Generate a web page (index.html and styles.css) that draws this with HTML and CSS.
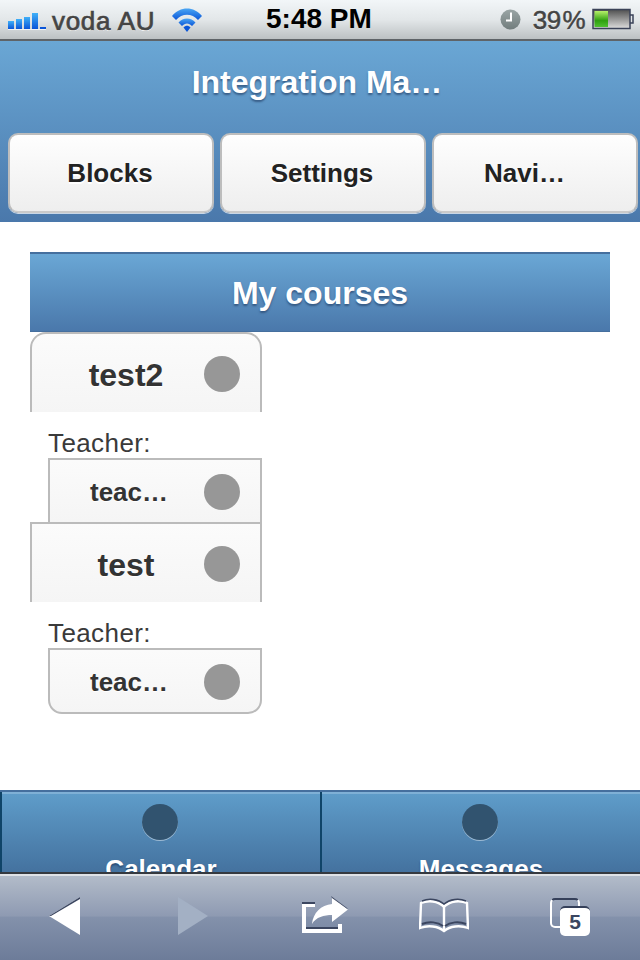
FILE: index.html
```html
<!DOCTYPE html>
<html lang="en">
<head>
  <meta charset="UTF-8">
  <title>My courses</title>
  <link rel="stylesheet" href="styles.css">
</head>
<body>

<div class="phone">

  <!-- iOS status bar -->
  <div class="statusbar">
    <div class="status-left">
      <svg class="signal" width="46" height="24" viewBox="0 0 46 24">
        <defs>
          <linearGradient id="barBlue" x1="0" y1="0" x2="0" y2="1">
            <stop offset="0" stop-color="#3fb0f8"/>
            <stop offset="1" stop-color="#0a55d8"/>
          </linearGradient>
        </defs>
        <rect x="0" y="14" width="6" height="8" fill="url(#barBlue)"/>
        <rect x="8" y="12" width="6" height="10" fill="url(#barBlue)"/>
        <rect x="16" y="10" width="6" height="12" fill="url(#barBlue)"/>
        <rect x="24" y="6" width="6" height="16" fill="url(#barBlue)"/>
        <rect x="32" y="20" width="6" height="2" fill="#0a55d8"/>
        <rect x="0" y="22" width="38" height="1" fill="#fff" opacity="0.7"/>
      </svg>
      <span class="carrier">voda AU</span>
      <svg class="wifi" width="30" height="24" viewBox="0 0 30 24">
        <defs>
          <linearGradient id="wifiBlue" x1="0" y1="0" x2="0" y2="1">
            <stop offset="0" stop-color="#4aa6f4"/>
            <stop offset="1" stop-color="#0a55d8"/>
          </linearGradient>
        </defs>
        <path d="M0 8 C8 -2 22 -2 30 8 L26 12 C20 5 10 5 4 12 Z" fill="url(#wifiBlue)"/>
        <path d="M6.5 14.5 C11 9 19 9 23.5 14.5 L20 18 C17 14.5 13 14.5 10 18 Z" fill="url(#wifiBlue)"/>
        <path d="M11.5 19.5 C13.5 17 16.5 17 18.5 19.5 L15 24 Z" fill="#0a55d8"/>
      </svg>
    </div>
    <span class="clock">5:48 PM</span>
    <div class="status-right">
      <svg class="alarm" width="21" height="21" viewBox="0 0 21 21">
        <defs>
          <linearGradient id="alarmGrey" x1="0" y1="0" x2="0" y2="1">
            <stop offset="0" stop-color="#9aa5a5"/>
            <stop offset="1" stop-color="#727d7d"/>
          </linearGradient>
        </defs>
        <circle cx="10.5" cy="10.5" r="10" fill="url(#alarmGrey)"/>
        <path d="M11 3.5 V11.5 H6" fill="none" stroke="#fff" stroke-width="2"/>
      </svg>
      <span class="percent">39 %</span>
      <svg class="battery" width="42" height="22" viewBox="0 0 42 22">
        <defs>
          <linearGradient id="battGreen" x1="0" y1="0" x2="0" y2="1">
            <stop offset="0" stop-color="#b6f06a"/>
            <stop offset="0.6" stop-color="#2fa010"/>
            <stop offset="1" stop-color="#4fc030"/>
          </linearGradient>
          <linearGradient id="battEmpty" x1="0" y1="0" x2="0" y2="1">
            <stop offset="0" stop-color="#4f4f4f"/>
            <stop offset="1" stop-color="#dedede"/>
          </linearGradient>
        </defs>
        <rect x="1" y="1.5" width="37" height="19" fill="url(#battEmpty)" stroke="#3a4258" stroke-width="1.5"/>
        <rect x="2.5" y="3" width="13.5" height="16" fill="url(#battGreen)"/>
        <path d="M38 7 H41 V15 H38" fill="none" stroke="#3a4258" stroke-width="1.5"/>
      </svg>
    </div>
  </div>

  <!-- page header -->
  <div class="header">
    <h1 class="title">Integration Ma…</h1>
    <div class="nav-buttons">
      <a class="nav-btn">Blocks</a>
      <a class="nav-btn">Settings</a>
      <a class="nav-btn nav-btn-cut">Navi…</a>
    </div>
  </div>

  <div class="content">
    <div class="section-head">My courses</div>

    <div class="course-list">
      <a class="row course first"><span class="row-label">test2</span><span class="dot"></span></a>
      <div class="teacher-label">Teacher:</div>
      <a class="row teacher"><span class="row-label">teac…</span><span class="dot"></span></a>

      <a class="row course"><span class="row-label">test</span><span class="dot"></span></a>
      <div class="teacher-label">Teacher:</div>
      <a class="row teacher last"><span class="row-label">teac…</span><span class="dot"></span></a>
    </div>
  </div>

  <!-- bottom tabs, cut off by the browser toolbar -->
  <div class="tabs">
    <a class="tab"><span class="tab-icon"></span><span class="tab-label">Calendar</span></a>
    <a class="tab"><span class="tab-icon"></span><span class="tab-label">Messages</span></a>
  </div>

  <!-- Safari toolbar -->
  <div class="toolbar">
    <svg class="tool tool-back" width="36" height="40" viewBox="0 0 36 40">
      <path d="M33 1 V39 L2 20 Z" fill="#fff"/>
      <path d="M2 20 L33 1 V3 L4 20 Z" fill="#3b4660"/>
    </svg>
    <svg class="tool tool-forward" width="36" height="40" viewBox="0 0 36 40">
      <path d="M3 1 V39 L33 20 Z" fill="#a3b0c4"/>
    </svg>
    <svg class="tool tool-share" width="48" height="40" viewBox="0 0 48 40">
      <path d="M2 7 H15 V11 H6 V33 H38 V28 H42 V37 H2 Z" fill="#fff"/>
      <path d="M2 6 H15 V8 H2 Z M6 31 H38 V33 H6 Z" fill="#3b4660"/>
      <path d="M32 1 L48 13.5 L32 26 V19 C24 19 16 21 12 28 C13 17 21 9 32 8 Z" fill="#fff"/>
      <path d="M31 0 L47 12 L48 13.5 L32 2 Z" fill="#3b4660"/>
    </svg>
    <svg class="tool tool-book" width="50" height="36" viewBox="0 0 50 36">
      <path d="M24 8 C19 3 9 2 2 5 L1 30 C9 27 19 28 25 33 C31 28 41 27 49 30 L48 5 C41 2 31 3 26 8 Z" fill="none" stroke="#fff" stroke-width="2.4"/>
      <path d="M25 8 V32" stroke="#fff" stroke-width="2.4"/>
      <path d="M3 26 C10 23 19 24 24 28 M26 28 C31 24 40 23 47 26" fill="none" stroke="#3b4660" stroke-width="2"/>
      <path d="M3 3 C10 0 19 1 25 6 C31 1 40 0 47 3" fill="none" stroke="#3b4660" stroke-width="1.5"/>
    </svg>
    <div class="tabs-icon">
      <span class="tabs-back"></span>
      <span class="tabs-count">5</span>
    </div>
  </div>

</div>

</body>
</html>
```

FILE: styles.css
```css
* {
  box-sizing: border-box;
}

body {
  margin: 0;
  background: #fff;
  font-family: "Liberation Sans", Arial, sans-serif;
}

.phone {
  width: 640px;
  height: 960px;
  display: flex;
  flex-direction: column;
  overflow: hidden;
}

/* status bar */
.statusbar {
  height: 41px;
  flex: none;
  display: flex;
  align-items: center;
  justify-content: space-between;
  position: relative;
  padding: 0 6px 1px 8px;
  background: linear-gradient(to bottom, #f2f6f8, #e3e7e9 50%, #bcc1c3);
  border-bottom: 2px solid #5f6468;
  color: #444;
  font-size: 26px;
  text-shadow: 0 1px 0 #fff;
}

.status-left,
.status-right {
  display: flex;
  align-items: center;
}

.signal {
  margin-right: -2px;
}

.carrier {
  margin-top: 4px;
  margin-right: 17px;
  letter-spacing: 0.7px;
  -webkit-text-stroke: 0.7px #444;
}

.wifi {
  margin-top: 2px;
}

.clock {
  position: absolute;
  left: 266px;
  top: 3px;
  font-size: 28px;
  font-weight: bold;
  color: #000;
  text-shadow: none;
}

.percent {
  margin: 2px 7px 0 12px;
  letter-spacing: -0.5px;
  word-spacing: -5px;
  -webkit-text-stroke: 0.5px #444;
}

/* header */
.header {
  height: 181px;
  flex: none;
  background: linear-gradient(to bottom, #6aa7d5, #4a78ab);
}

.title {
  margin: 0;
  height: 92px;
  padding-right: 6px;
  line-height: 82px;
  text-align: center;
  color: #fff;
  font-size: 32px;
  font-weight: bold;
  text-shadow: 0 2px 2px rgba(40, 70, 110, 0.7);
}

.nav-buttons {
  display: grid;
  grid-template-columns: repeat(3, 1fr);
  gap: 6px;
  padding: 0 2px 0 8px;
}

.nav-btn {
  height: 80px;
  display: flex;
  align-items: center;
  justify-content: center;
  padding: 1px 2px 0 0;
  border: 2px solid #bdbdbd;
  border-bottom-color: #cacaca;
  border-radius: 10px;
  background: linear-gradient(to bottom, #fefefe, #eeeeee);
  box-shadow: 0 1px 0 rgba(255, 255, 255, 0.7);
  color: #222;
  font-size: 26px;
  font-weight: bold;
  text-shadow: 0 2px 0 #fff;
}

.nav-btn-cut {
  padding-right: 21px;
}

/* content */
.content {
  flex: 1;
  padding: 30px 30px 0;
}

.section-head {
  height: 80px;
  display: flex;
  align-items: center;
  justify-content: center;
  padding-top: 2px;
  border-top: 2px solid #456f9e;
  border-bottom: 1px solid #456f9e;
  background: linear-gradient(to bottom, #6aa7d5, #4a78ab);
  color: #fff;
  font-size: 32px;
  font-weight: bold;
  text-shadow: 0 2px 2px rgba(40, 70, 110, 0.7);
}

.course-list {
  width: 232px;
}

.row {
  display: flex;
  align-items: center;
  position: relative;
  border: 2px solid #bbb;
  background: linear-gradient(to bottom, #fbfbfb, #f5f5f5);
  color: #333;
  font-weight: bold;
  text-shadow: 0 1px 0 #fff;
}

.row-label {
  flex: 1;
  text-align: center;
}

.dot {
  position: absolute;
  right: 20px;
  width: 36px;
  height: 36px;
  border-radius: 50%;
  background: #979797;
}

.course {
  height: 80px;
  padding: 4px 40px 0 0;
  border-bottom: 0;
  font-size: 32px;
}

.course .dot {
  margin-top: -2px;
}

.course.first {
  border-radius: 16px 16px 0 0;
}

.teacher {
  height: 66px;
  margin-left: 18px;
  padding: 2px 52px 0 0;
  font-size: 26px;
}

.teacher + .course {
  margin-top: -2px;
}

.teacher.last {
  border-radius: 0 0 14px 14px;
}

.teacher-label {
  height: 46px;
  padding: 16px 0 0 18px;
  line-height: 30px;
  color: #3a3a3a;
  font-size: 26px;
  letter-spacing: 0.4px;
}

/* bottom tabs */
.tabs {
  height: 82px;
  flex: none;
  display: grid;
  grid-template-columns: 1fr 1fr;
  overflow: hidden;
  border-top: 2px solid #456f9e;
  background: linear-gradient(to bottom, #5f9dca, #44729f);
  box-shadow: inset 0 2px 0 #7fb0d6;
}

.tab {
  display: flex;
  flex-direction: column;
  align-items: center;
  padding-top: 12px;
  border-left: 2px solid #0f4468;
  color: #fff;
  font-size: 26px;
  font-weight: bold;
  text-shadow: 0 2px 2px rgba(30, 60, 100, 0.7);
}

.tab-icon {
  width: 36px;
  height: 36px;
  flex: none;
  margin-left: -2px;
  border-radius: 50%;
  background: #31536f;
  box-shadow: 0 1px 0 rgba(255, 255, 255, 0.45);
}

.tab-label {
  margin-top: 14px;
  line-height: 30px;
}

/* Safari toolbar */
.toolbar {
  height: 88px;
  flex: none;
  display: flex;
  align-items: center;
  padding: 0 0 2px 47px;
  border-top: 2px solid #35393f;
  background: linear-gradient(to bottom, #b4bdca, #8e9ab2 49%, #8391ab 50%, #6d7c99);
  box-shadow: inset 0 2px 0 #dfe2e6;
}

.tool-forward {
  margin-left: 92px;
}

.tool-share {
  margin-left: 89px;
}

.tool-book {
  margin-left: 71px;
}

.tabs-icon {
  width: 40px;
  height: 38px;
  margin: 2px 0 0 81px;
  position: relative;
}

.tabs-back {
  position: absolute;
  left: 0;
  top: 0;
  width: 30px;
  height: 30px;
  border: 2px solid #fff;
  border-top-color: #35405a;
  border-radius: 5px;
}

.tabs-count {
  position: absolute;
  right: 0;
  bottom: 0;
  width: 30px;
  height: 30px;
  display: flex;
  align-items: center;
  justify-content: center;
  border-top: 2px solid #35405a;
  border-radius: 5px;
  background: #fff;
  color: #3b4660;
  font-size: 21px;
  font-weight: bold;
}
```
